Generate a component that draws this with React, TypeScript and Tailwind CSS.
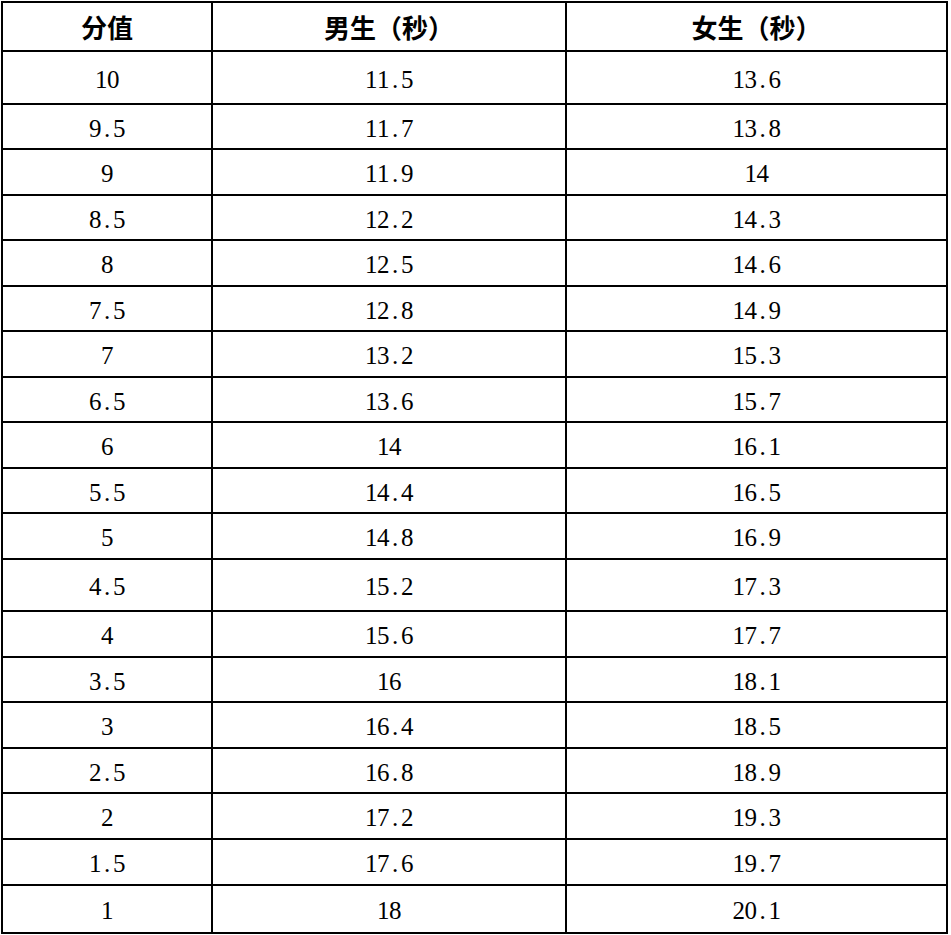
import React from "react";

const rows: [string, string, string][] = [
  ["10", "11.5", "13.6"],
  ["9.5", "11.7", "13.8"],
  ["9", "11.9", "14"],
  ["8.5", "12.2", "14.3"],
  ["8", "12.5", "14.6"],
  ["7.5", "12.8", "14.9"],
  ["7", "13.2", "15.3"],
  ["6.5", "13.6", "15.7"],
  ["6", "14", "16.1"],
  ["5.5", "14.4", "16.5"],
  ["5", "14.8", "16.9"],
  ["4.5", "15.2", "17.3"],
  ["4", "15.6", "17.7"],
  ["3.5", "16", "18.1"],
  ["3", "16.4", "18.5"],
  ["2.5", "16.8", "18.9"],
  ["2", "17.2", "19.3"],
  ["1.5", "17.6", "19.7"],
  ["1", "18", "20.1"],
];

function Num({ v }: { v: string }) {
  return (
    <span className="flex">
      {v.split("").map((c, i) => (
        <span key={i} className="inline-block w-[12px] text-center">
          {c}
        </span>
      ))}
    </span>
  );
}

export default function App() {
  return (
    <div className="w-[951px] h-[935px] bg-white pl-[1px] pt-[1px]">
      <div className="inline-grid grid-cols-[208px_352px_379px] grid-rows-[47px_51px_43px_44px_43px_44px_43px_44px_43px_44px_43px_44px_50px_44px_43px_44px_43px_44px_44px_46px] gap-[2px] bg-black p-[2px]">
        {["分值", "男生（秒）", "女生（秒）"].map((h) => (
          <div
            key={h}
            className="bg-white flex items-center justify-center text-[26px] font-semibold text-black leading-none"
            style={{ fontFamily: '"Noto Sans CJK SC", sans-serif' }}
          >
            {h}
          </div>
        ))}
        {rows.map((r, ri) =>
          r.map((v, ci) => (
            <div
              key={`${ri}-${ci}`}
              className="bg-white flex items-center justify-center pt-[3px] text-[25px] text-black leading-none"
              style={{ fontFamily: '"Liberation Serif", "Times New Roman", serif' }}
            >
              <Num v={v} />
            </div>
          ))
        )}
      </div>
    </div>
  );
}
